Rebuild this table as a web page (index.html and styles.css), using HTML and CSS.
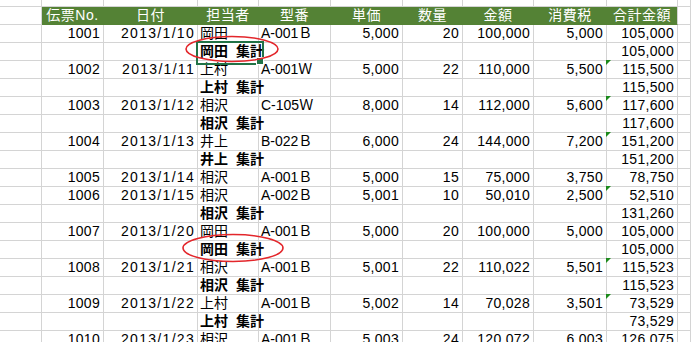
FILE: index.html
```html
<!DOCTYPE html>
<html lang="ja">
<head>
<meta charset="UTF-8">
<title>売上一覧</title>
<link rel="stylesheet" href="styles.css">
</head>
<body>
<div class="sheet">
  <div class="row top"><div></div><div></div><div></div><div></div><div></div><div></div><div></div><div></div><div></div><div></div><div></div></div>
  <div class="row head"><div></div><div class="h">伝票No.</div><div class="h">日付</div><div class="h">担当者</div><div class="h">型番</div><div class="h">単価</div><div class="h">数量</div><div class="h">金額</div><div class="h">消費税</div><div class="h last">合計金額</div><div></div></div>

  <div class="row"><div></div><div class="n">1001</div><div class="n d">2013/1/10</div><div>岡田</div><div>A-001Ｂ</div><div class="n">5,000</div><div class="n">20</div><div class="n">100,000</div><div class="n">5,000</div><div class="n">105,000</div><div></div></div>
  <div class="row"><div></div><div></div><div></div><div class="sub sel">岡田 集計</div><div></div><div></div><div></div><div></div><div></div><div class="n">105,000</div><div></div></div>

  <div class="row"><div></div><div class="n">1002</div><div class="n d">2013/1/11</div><div>上村</div><div>A-001Ｗ</div><div class="n">5,000</div><div class="n">22</div><div class="n">110,000</div><div class="n">5,500</div><div class="n tri">115,500</div><div></div></div>
  <div class="row"><div></div><div></div><div></div><div class="sub">上村 集計</div><div></div><div></div><div></div><div></div><div></div><div class="n">115,500</div><div></div></div>

  <div class="row"><div></div><div class="n">1003</div><div class="n d">2013/1/12</div><div>相沢</div><div>C-105Ｗ</div><div class="n">8,000</div><div class="n">14</div><div class="n">112,000</div><div class="n">5,600</div><div class="n tri">117,600</div><div></div></div>
  <div class="row"><div></div><div></div><div></div><div class="sub">相沢 集計</div><div></div><div></div><div></div><div></div><div></div><div class="n">117,600</div><div></div></div>

  <div class="row"><div></div><div class="n">1004</div><div class="n d">2013/1/13</div><div>井上</div><div>B-022Ｂ</div><div class="n">6,000</div><div class="n">24</div><div class="n">144,000</div><div class="n">7,200</div><div class="n tri">151,200</div><div></div></div>
  <div class="row"><div></div><div></div><div></div><div class="sub">井上 集計</div><div></div><div></div><div></div><div></div><div></div><div class="n">151,200</div><div></div></div>

  <div class="row"><div></div><div class="n">1005</div><div class="n d">2013/1/14</div><div>相沢</div><div>A-001Ｂ</div><div class="n">5,000</div><div class="n">15</div><div class="n">75,000</div><div class="n">3,750</div><div class="n">78,750</div><div></div></div>
  <div class="row"><div></div><div class="n">1006</div><div class="n d">2013/1/15</div><div>相沢</div><div>A-002Ｂ</div><div class="n">5,001</div><div class="n">10</div><div class="n">50,010</div><div class="n">2,500</div><div class="n tri">52,510</div><div></div></div>
  <div class="row"><div></div><div></div><div></div><div class="sub">相沢 集計</div><div></div><div></div><div></div><div></div><div></div><div class="n">131,260</div><div></div></div>

  <div class="row"><div></div><div class="n">1007</div><div class="n d">2013/1/20</div><div>岡田</div><div>A-001Ｂ</div><div class="n">5,000</div><div class="n">20</div><div class="n">100,000</div><div class="n">5,000</div><div class="n">105,000</div><div></div></div>
  <div class="row"><div></div><div></div><div></div><div class="sub">岡田 集計</div><div></div><div></div><div></div><div></div><div></div><div class="n">105,000</div><div></div></div>

  <div class="row"><div></div><div class="n">1008</div><div class="n d">2013/1/21</div><div>相沢</div><div>A-001Ｂ</div><div class="n">5,001</div><div class="n">22</div><div class="n">110,022</div><div class="n">5,501</div><div class="n tri">115,523</div><div></div></div>
  <div class="row"><div></div><div></div><div></div><div class="sub">相沢 集計</div><div></div><div></div><div></div><div></div><div></div><div class="n">115,523</div><div></div></div>

  <div class="row"><div></div><div class="n">1009</div><div class="n d">2013/1/22</div><div>上村</div><div>A-001Ｂ</div><div class="n">5,002</div><div class="n">14</div><div class="n">70,028</div><div class="n">3,501</div><div class="n tri">73,529</div><div></div></div>
  <div class="row"><div></div><div></div><div></div><div class="sub">上村 集計</div><div></div><div></div><div></div><div></div><div></div><div class="n">73,529</div><div></div></div>

  <div class="row"><div></div><div class="n">1010</div><div class="n d">2013/1/23</div><div>相沢</div><div>A-001Ｂ</div><div class="n">5,003</div><div class="n">24</div><div class="n">120,072</div><div class="n">6,003</div><div class="n">126,075</div><div></div></div>

  <!-- 赤丸の注記 -->
  <svg class="marks" width="691" height="342" viewBox="0 0 691 342">
    <ellipse cx="232" cy="49" rx="46" ry="12.5" />
    <ellipse cx="233" cy="248" rx="50" ry="13.5" />
  </svg>
</div>
</body>
</html>
```

FILE: styles.css
```css
*{margin:0;padding:0;box-sizing:border-box;}
html,body{background:#fff;}
body{width:691px;height:342px;overflow:hidden;font-family:"Liberation Sans","Noto Sans CJK JP",sans-serif;font-size:14px;color:#000;}
.sheet{position:relative;}

.row{display:grid;grid-template-columns:42px 62px 94px 61px 72px 72px 60px 71px 73px 71px 1fr;height:18px;}
.row>div{border-right:1px solid #d4d4d4;border-bottom:1px solid #d4d4d4;line-height:17px;white-space:nowrap;padding:0 3px 0 2px;}
.row.top{height:7px;}

.head .h{background:#548235;color:#fff;text-align:center;border-right-color:#548235;border-bottom-color:#548235;padding:0;letter-spacing:.5px;}
.head .h.last{border-right-color:#d4d4d4;}

.n{text-align:right;letter-spacing:.3px;padding-right:3px;}
.n.d{letter-spacing:1.3px;padding-right:2px;}
.sub{font-weight:bold;word-spacing:4px;}

/* 選択中のセル */
.sel{position:relative;}
.sel::before{content:"";position:absolute;left:-2px;top:-2px;width:64px;height:20px;border:2px solid #217346;}
.sel::after{content:"";position:absolute;left:58px;top:14px;width:6px;height:6px;background:#217346;border:1px solid #fff;}

/* エラーインジケータ */
.tri{position:relative;}
.tri::before{content:"";position:absolute;left:-1px;top:-1px;border-top:5px solid #1c8a1c;border-right:5px solid transparent;}

.marks{position:absolute;left:0;top:0;pointer-events:none;}
.marks ellipse{fill:none;stroke:#e3262b;stroke-width:1.6;}
```
